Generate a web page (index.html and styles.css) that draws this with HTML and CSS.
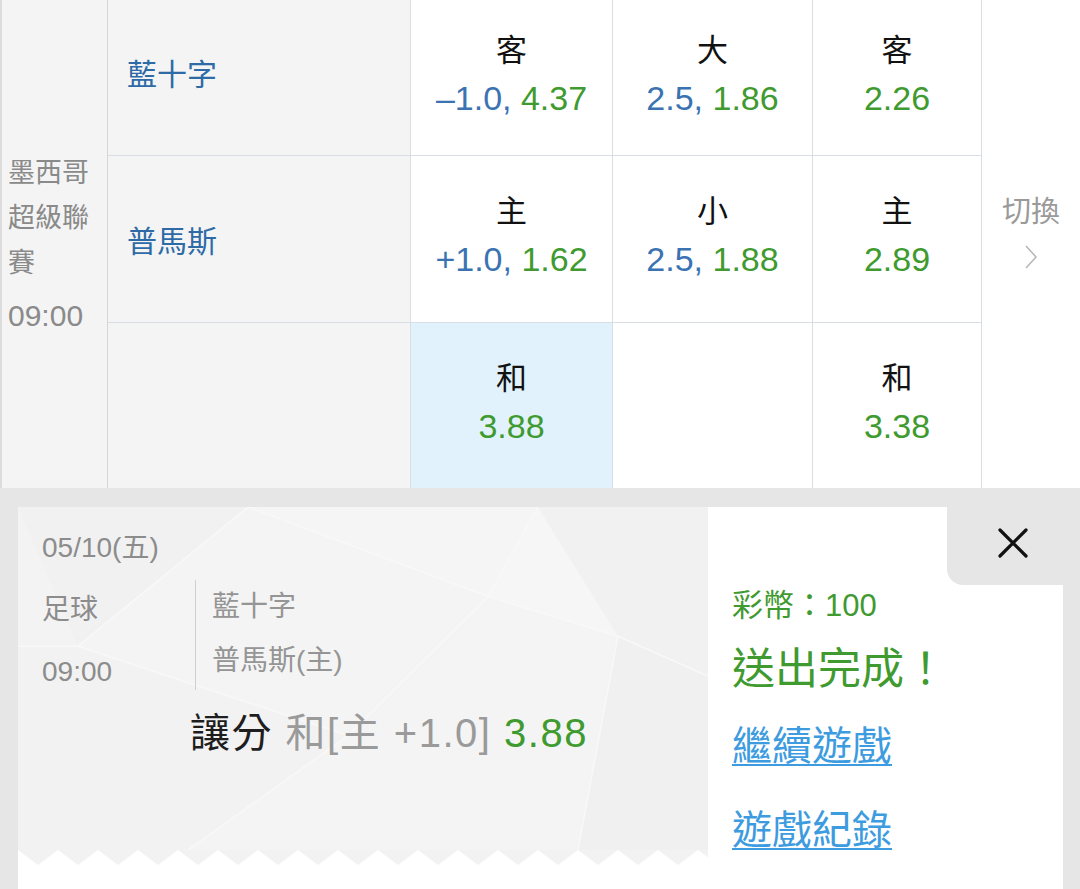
FILE: index.html
```html
<!DOCTYPE html>
<html lang="zh-Hant">
<head>
  <meta charset="UTF-8">
  <meta name="viewport" content="width=device-width, initial-scale=1.0">
  <title>投注單</title>
  <link rel="stylesheet" href="styles.css">
</head>
<body>
  <section class="match">
    <div class="league">
      <div class="league-name">墨西哥超級聯賽</div>
      <div class="league-time">09:00</div>
    </div>

    <div class="team away">藍十字</div>
    <div class="odd"><span class="pick">客</span><span class="val"><b class="line">–1.0,</b> 4.37</span></div>
    <div class="odd"><span class="pick">大</span><span class="val"><b class="line">2.5,</b> 1.86</span></div>
    <div class="odd"><span class="pick">客</span><span class="val">2.26</span></div>
    <div class="side"></div>

    <div class="team">普馬斯</div>
    <div class="odd"><span class="pick">主</span><span class="val"><b class="line">+1.0,</b> 1.62</span></div>
    <div class="odd"><span class="pick">小</span><span class="val"><b class="line">2.5,</b> 1.88</span></div>
    <div class="odd"><span class="pick">主</span><span class="val">2.89</span></div>
    <div class="side switch">
      切換
      <svg viewBox="0 0 14 26" width="14" height="26"><polyline points="2,2 12,13 2,24" fill="none" stroke="#b8b8b8" stroke-width="1.6"/></svg>
    </div>

    <div class="team"></div>
    <div class="odd selected"><span class="pick">和</span><span class="val">3.88</span></div>
    <div class="odd"></div>
    <div class="odd"><span class="pick">和</span><span class="val">3.38</span></div>
    <div class="side"></div>
  </section>

  <section class="slip">
    <div class="card">
      <div class="ticket">
        <svg class="ticket-bg" viewBox="0 0 690 345" preserveAspectRatio="none">
          <rect width="690" height="345" fill="#f3f3f3"/>
          <polygon points="0,0 230,0 60,140" fill="#f1f1f1"/>
          <polygon points="230,0 520,0 470,90" fill="#f5f5f5"/>
          <polygon points="470,90 520,0 600,130" fill="#f6f6f6"/>
          <polygon points="520,0 690,0 690,170 600,130" fill="#f1f1f1"/>
          <polygon points="60,140 230,0 470,90 330,230" fill="#f4f4f4"/>
          <polygon points="0,140 60,140 330,230 170,345 0,345" fill="#f2f2f2"/>
          <polygon points="330,230 470,90 600,130 560,345 170,345" fill="#f4f4f4"/>
          <polygon points="600,130 690,170 690,345 560,345" fill="#f0f0f0"/>
          <g fill="none" stroke="#f8f8f8" stroke-width="1.5">
            <polyline points="60,140 230,0 470,90 600,130 690,170"/>
            <polyline points="0,140 60,140 330,230 470,90"/>
            <polyline points="470,90 520,0"/>
            <polyline points="330,230 170,345"/>
            <polyline points="600,130 560,345"/>
          </g>
        </svg>
        <div class="ticket-body">
          <div class="date">05/10(五)</div>
          <div class="info">
            <div class="info-left">
              <div>足球</div>
              <div class="time">09:00</div>
            </div>
            <div class="info-teams">
              <div>藍十字</div>
              <div>普馬斯(主)</div>
            </div>
          </div>
          <div class="bet"><span class="bet-type">讓分</span> 和[主 +1.0] <span class="bet-odd">3.88</span></div>
        </div>
        <svg class="zigzag" width="100%" height="15">
          <defs>
            <pattern id="teeth" width="40" height="15" patternUnits="userSpaceOnUse">
              <path d="M0 0 L40 0 L20 15 Z" fill="#f2f2f2"/>
            </pattern>
          </defs>
          <rect width="100%" height="15" fill="url(#teeth)"/>
        </svg>
      </div>

      <div class="result">
        <div class="result-head">
          <button class="close" aria-label="關閉">
            <svg viewBox="0 0 30 30" width="30" height="30"><path d="M2 2 L28 28 M28 2 L2 28" stroke="#111" stroke-width="3.2" stroke-linecap="round"/></svg>
          </button>
        </div>
        <div class="coins">彩幣：100</div>
        <div class="done">送出完成！</div>
        <a href="#" class="link first">繼續遊戲</a>
        <a href="#" class="link">遊戲紀錄</a>
      </div>
    </div>
  </section>
</body>
</html>
```

FILE: styles.css
```css
/* base */
body {
  margin: 0;
  width: 1080px;
  height: 889px;
  overflow: hidden;
  background: #fff;
  font-family: "Liberation Sans", "Noto Sans CJK TC", sans-serif;
  color: #111;
}

/* --- match table --- */
.match {
  display: grid;
  grid-template-columns: 108px 303px 202px 200px 169px 98px;
  grid-template-rows: 156px 167px 165px;
}

.league {
  grid-row: 1 / 4;
  background: #f4f4f4;
  border-left: 2px solid #dcdcdc;
  border-right: 1px solid #d6d6d6;
  padding: 0 0 0 6px;
  display: flex;
  flex-direction: column;
  justify-content: center;
  color: #8a8a8a;
}

.league-name {
  font-size: 27px;
  line-height: 45px;
  width: 90px;
}

.league-time {
  font-size: 30px;
  line-height: 44px;
  margin-top: 8px;
}

.team {
  background: #f4f4f4;
  border-bottom: 1px solid #d9dee4;
  border-right: 1px solid #d9dee4;
  display: flex;
  align-items: center;
  padding-left: 19px;
  font-size: 30px;
  color: #2d6aa6;
}

.team.away { padding-bottom: 12px; }

.odd {
  border-bottom: 1px solid #d9dee4;
  border-right: 1px solid #d9dee4;
  display: flex;
  flex-direction: column;
  align-items: center;
  justify-content: center;
}

.match > :nth-last-child(-n+5) { border-bottom: none; }

.odd.selected { background: #e2f2fc; }

.pick {
  font-size: 31px;
  line-height: 44px;
  color: #111;
  margin-top: -4px;
}

.val {
  font-size: 34px;
  line-height: 50px;
  color: #3f9a2f;
}

.val .line {
  font-weight: normal;
  color: #3a72b2;
}

.side {
  display: flex;
  flex-direction: column;
  align-items: center;
  justify-content: center;
}

.switch {
  font-size: 29px;
  color: #9a9a9a;
  line-height: 40px;
  padding-bottom: 18px;
}

.switch svg { margin-top: 12px; }

/* --- bet slip --- */
.slip {
  background: #e6e6e6;
  height: 401px;
  padding: 19px 17px 0 18px;
  box-sizing: border-box;
}

.card {
  display: flex;
  height: 100%;
  background: #fff;
}

.ticket {
  width: 690px;
  height: 358px;
  position: relative;
  display: flex;
  flex-direction: column;
}

.ticket-bg {
  position: absolute;
  left: 0;
  top: 0;
  width: 100%;
  height: 343px;
}

.ticket-body {
  position: relative;
  height: 343px;
  box-sizing: border-box;
  padding: 21px 0 0 24px;
  color: #8c8c8c;
  font-size: 28px;
}

.date { line-height: 40px; }

.info {
  display: flex;
  margin-top: 14px;
}

.info-left {
  width: 153px;
  line-height: 56px;
}

.info-left .time { margin-top: 6px; }

.info-teams {
  border-left: 1px solid #cfcfcf;
  padding-left: 16px;
  height: 110px;
  line-height: 54px;
  color: #959595;
  margin-top: -2px;
}

.bet {
  margin: 8px 0 0 148px;
  font-size: 40px;
  letter-spacing: 1.5px;
  line-height: 50px;
  color: #9a9a9a;
  white-space: nowrap;
}

.bet-type { color: #1e1e1e; }
.bet-odd { color: #3f9a2f; }

.zigzag { display: block; }

.result {
  flex: 1;
  padding-left: 24px;
  display: flex;
  flex-direction: column;
  align-items: flex-start;
}

.result-head {
  align-self: stretch;
  display: flex;
  justify-content: flex-end;
}

.close {
  width: 116px;
  height: 78px;
  border: none;
  padding: 0 0 6px 16px;
  background: #e6e6e6;
  border-bottom-left-radius: 16px;
  display: flex;
  align-items: center;
  justify-content: center;
  cursor: pointer;
}

.coins {
  color: #3f9a2f;
  font-size: 31px;
  line-height: 40px;
  margin-top: 1px;
}

.done {
  color: #3f9a2f;
  font-size: 43px;
  line-height: 56px;
  margin-top: 15px;
}

.link {
  color: #3d9be0;
  font-size: 40px;
  line-height: 50px;
  text-decoration: underline;
  text-decoration-thickness: 2px;
  text-underline-offset: 4px;
  margin-top: 34px;
}

.link.first { margin-top: 24px; }
```
